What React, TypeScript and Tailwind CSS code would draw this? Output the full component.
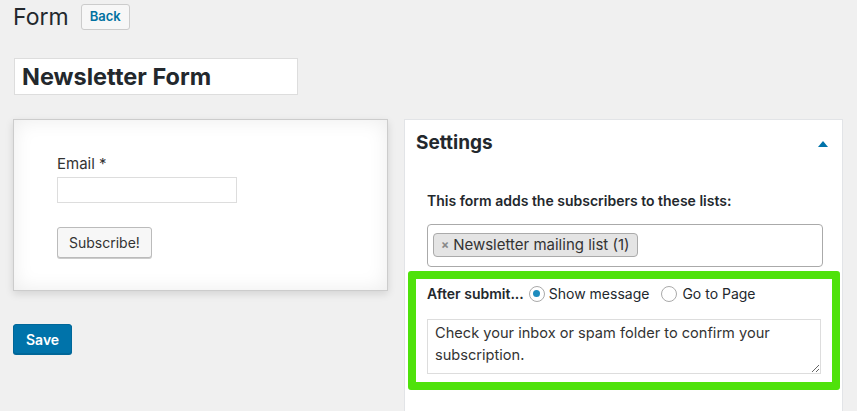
import React, { useState } from "react";

export default function App() {
    const [after, setAfter] = useState<"message" | "page">("message");

    return (
        <div className="min-h-[411px] h-[411px] overflow-hidden bg-[#f0f0f0] pl-[13px] pr-[14px] text-[#23282d] font-['Inter','Liberation_Sans',sans-serif]">
            {/* Header */}
            <div className="flex items-center gap-[12px] pt-[4px]">
                <h1 className="text-[23px] leading-[26px] font-normal">Form</h1>
                <button className="h-[26px] px-[8px] text-[13px] font-semibold text-[#0071a1] border border-[#ccc] rounded-[3px] bg-[#f7f7f7]">
                    Back
                </button>
            </div>

            {/* Title */}
            <input
                defaultValue="Newsletter Form"
                className="mt-[28px] ml-px w-[284px] h-[37px] px-[7px] bg-white border border-[#ddd] text-[23.5px] font-bold text-[#23282d] outline-none"
            />

            <div className="mt-[24px] flex gap-[16px]">
                {/* Left column */}
                <div className="w-[375px] shrink-0">
                    <div className="h-[172px] bg-white border border-[#ccc] shadow-[inset_0_0_20px_rgba(0,0,0,0.08),0_3px_8px_rgba(0,0,0,0.12)] pl-[43px] pt-[34px]">
                        <label className="block text-[15px] leading-[20px] text-[#333]">Email *</label>
                        <input className="mt-[3px] w-[180px] h-[26px] border border-[#ddd] bg-white" />
                        <button className="mt-[24px] block h-[31px] px-[11px] text-[14px] text-[#333] bg-[#f7f7f7] border border-[#bbb] rounded-[3px] shadow-[0_1px_0_#ccc]">
                            Subscribe!
                        </button>
                    </div>
                    <button className="mt-[33px] h-[30px] px-[12px] bg-[#0073aa] text-white text-[14px] font-semibold rounded-[3px] border border-[#006799] shadow-[0_1px_0_#006799]">
                        Save
                    </button>
                </div>

                {/* Settings panel */}
                <div className="flex-1 h-[300px] bg-white border border-[#e2e4e7]">
                    <div className="flex items-center justify-between pl-[11px] pr-[14px] pt-[11px]">
                        <h2 className="text-[19px] leading-[24px] font-bold">Settings</h2>
                        <svg width="10" height="7" viewBox="0 0 10 7">
                            <path d="M0 7 L5 1 L10 7 Z" fill="#0073aa" />
                        </svg>
                    </div>

                    <div className="pl-[22px] pr-[19px] pt-[38px]">
                        <p className="text-[14px] font-semibold leading-[16px]">This form adds the subscribers to these lists:</p>
                        <div className="mt-[15px] h-[43px] border border-[#aaa] rounded-[4px] pl-[5px] pt-[6px]">
                            <span className="inline-flex items-center h-[24px] px-[7px] bg-[#e4e4e4] border border-[#aaa] rounded-[4px] text-[15px] text-[#333]">
                                <span className="text-[#888] text-[12px] font-bold mr-[4px]">×</span>
                                Newsletter mailing list (1)
                            </span>
                        </div>
                    </div>

                    {/* Highlighted after-submit box */}
                    <div className="mt-[4px] ml-[3px] w-[432px] border-[8px] border-[#4fe20b] rounded-[3px] pl-[11px] pr-[10px] pt-[4px] pb-[8px]">
                        <div className="flex items-center">
                            <span className="text-[14px] font-semibold">After submit...</span>
                            <label className="ml-[5px] flex items-center gap-[4px] text-[14px]">
                                <span
                                    onClick={() => setAfter("message")}
                                    className="w-[16px] h-[16px] rounded-full border border-[#aaa] flex items-center justify-center"
                                >
                                    {after === "message" && <span className="w-[7px] h-[7px] rounded-full bg-[#1e8cbe]" />}
                                </span>
                                Show message
                            </label>
                            <label className="ml-[12px] flex items-center gap-[5px] text-[14px]">
                                <span
                                    onClick={() => setAfter("page")}
                                    className="w-[16px] h-[16px] rounded-full border border-[#aaa] flex items-center justify-center"
                                >
                                    {after === "page" && <span className="w-[7px] h-[7px] rounded-full bg-[#1e8cbe]" />}
                                </span>
                                Go to Page
                            </label>
                        </div>
                        <textarea
                            defaultValue="Check your inbox or spam folder to confirm your subscription."
                            className="mt-[15px] block w-[394px] h-[55px] border border-[#ddd] px-[7px] py-[2px] text-[14.6px] leading-[22px] text-[#333] resize-y outline-none"
                        />
                    </div>
                </div>
            </div>
        </div>
    );
}
